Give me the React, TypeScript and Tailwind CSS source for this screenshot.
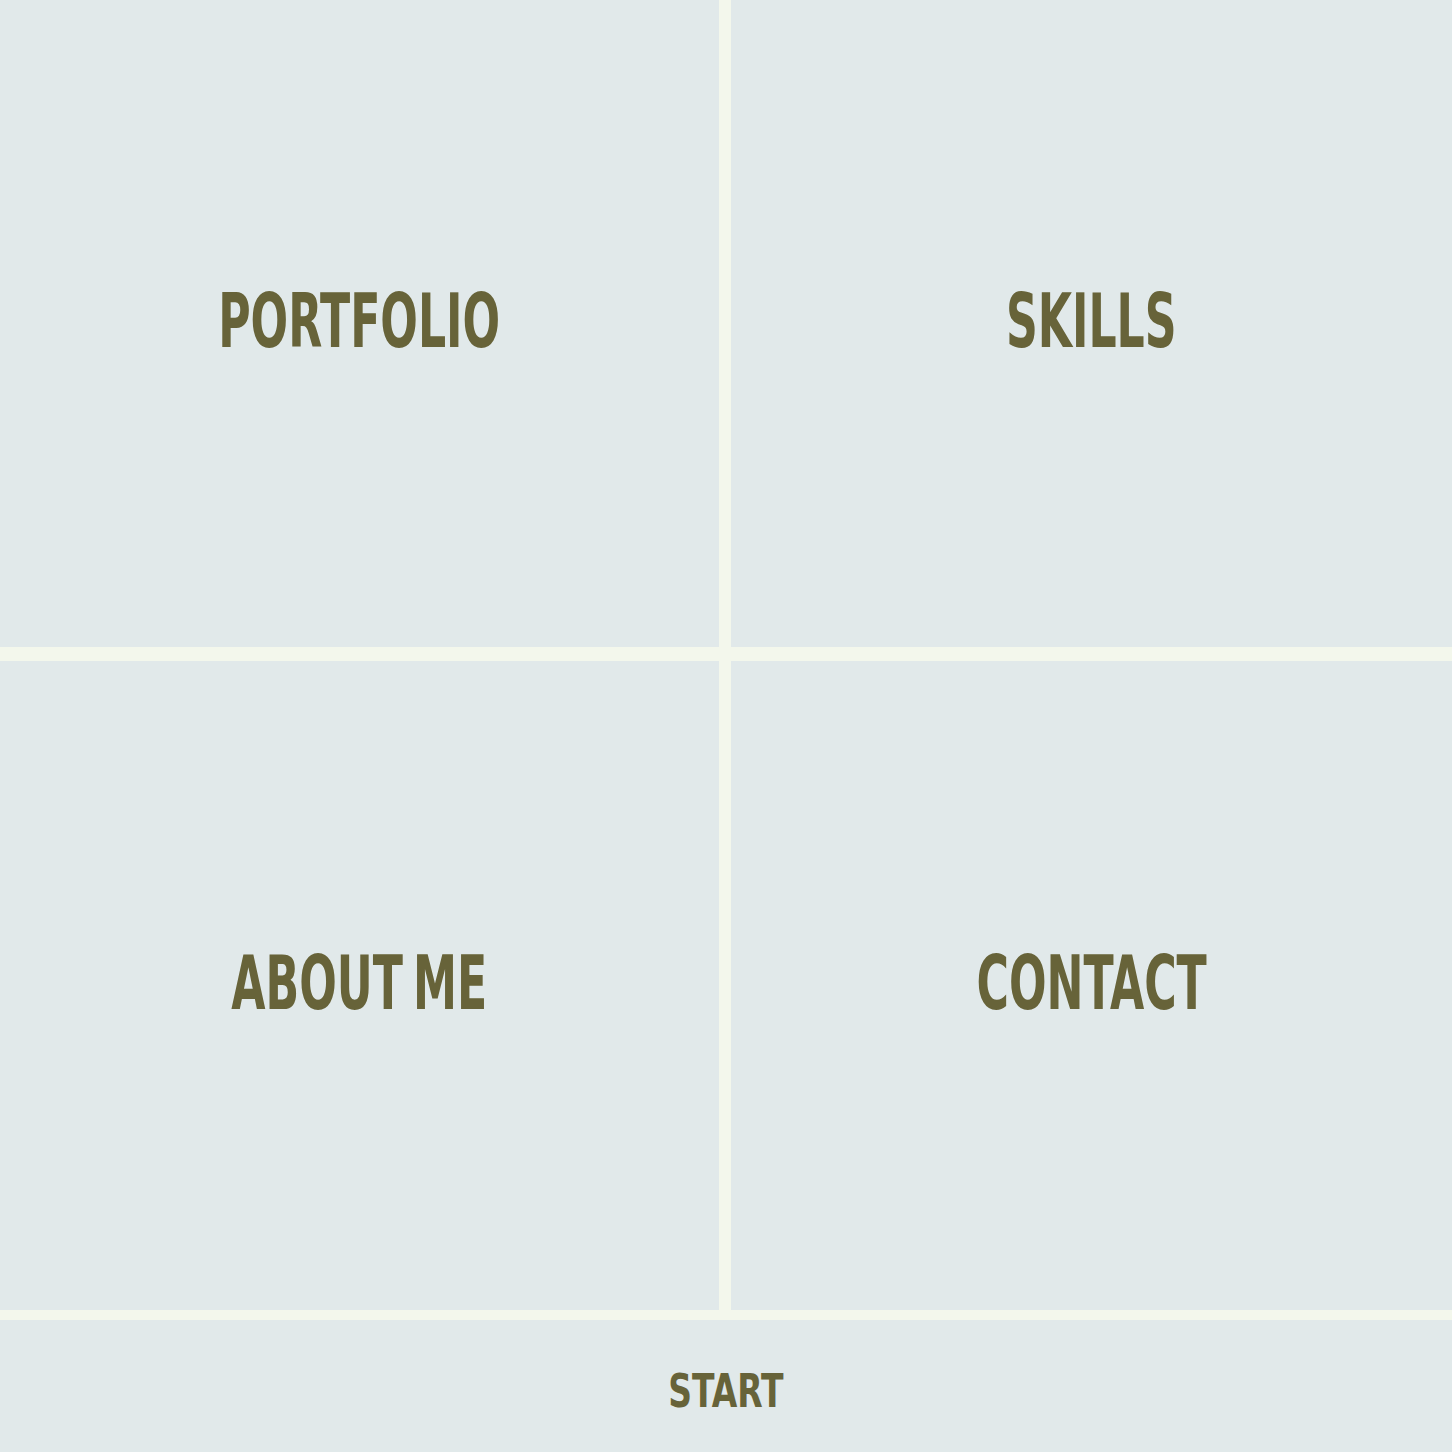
import React from 'react';

const tiles = ['PORTFOLIO', 'SKILLS', 'ABOUT ME', 'CONTACT'];

const App: React.FC = () => {
  return (
    <div className="min-h-screen w-full bg-[#f3f7ec] flex flex-col">
      <div className="grid grid-cols-[719px_1fr] grid-rows-[647px_649px] gap-x-[12px] gap-y-[14px]">
        {tiles.map((t) => (
          <a
            key={t}
            href="#"
            className="bg-[#e1e9ea] flex items-center justify-center pb-[5px]"
          >
            <span
              className="inline-block whitespace-nowrap text-[#676339] text-[75px] leading-none font-bold scale-x-[0.655] [word-spacing:-8px]"
              style={{ fontFamily: '"DejaVu Sans Condensed", sans-serif' }}
            >
              {t}
            </span>
          </a>
        ))}
      </div>
      <div className="mt-[10px] h-[132px] bg-[#e1e9ea] flex items-center justify-center pt-[8px]">
        <span
          className="inline-block text-[#676339] text-[47px] leading-none font-bold scale-x-[0.78]"
          style={{ fontFamily: '"DejaVu Sans Condensed", sans-serif' }}
        >
          START
        </span>
      </div>
    </div>
  );
};

export default App;
